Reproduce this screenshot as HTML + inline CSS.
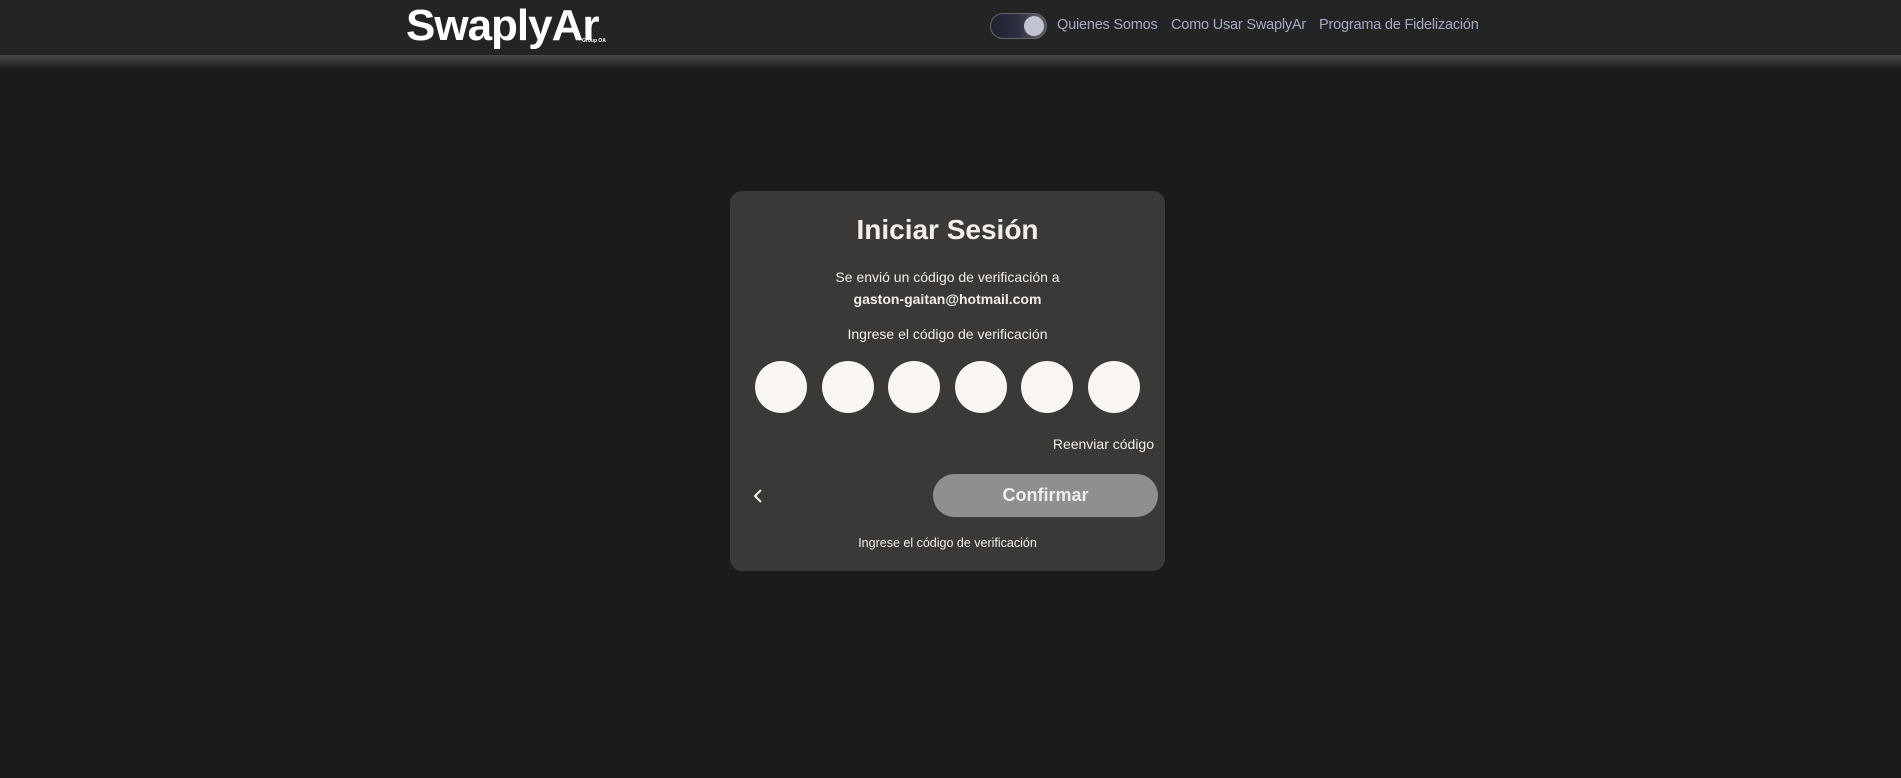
<!DOCTYPE html>
<html><head><meta charset="utf-8"><style>
*{margin:0;padding:0;box-sizing:border-box}
body{width:1901px;height:778px;background:#1b1b1b;font-family:"Liberation Sans",sans-serif;position:relative;overflow:hidden}
.hdr{position:absolute;left:0;top:0;width:1901px;height:56px;background:#242424}
.band{position:absolute;left:0;top:55px;width:1901px;height:14px;background:linear-gradient(#4a4a4a,#1b1b1b)}
.logo{position:absolute;left:406px;top:1px;font-size:44px;font-weight:bold;color:#fff;letter-spacing:-1px}
.sub{position:absolute;left:582px;top:38px;font-size:5px;color:#fff;font-weight:bold}
.tog{position:absolute;left:990px;top:13px;width:57px;height:26px;border-radius:13px;background:linear-gradient(90deg,#1e2233,#2c3040 50%,#555 80%);border:1.5px solid #666}
.knob{position:absolute;right:2px;top:2px;width:20px;height:20px;border-radius:50%;background:#c0c4d0}
.nav{position:absolute;top:17px;font-size:14.5px;color:#a3abc4;letter-spacing:-0.2px}
.card{position:absolute;left:730px;top:191px;width:435px;height:380px;background:#393938;border-radius:12px;color:#f5eee6;text-align:center}
.t{position:absolute;width:100%;left:0}
.c{position:absolute;top:170px;width:52px;height:52px;border-radius:50%;background:#f9f5f0}
.btn{position:absolute;left:203px;top:283px;width:225px;height:43px;border-radius:22px;background:#8f8f8f;color:#efefef;font-size:18px;font-weight:bold;line-height:43px;text-align:center}
</style></head><body>
<div class="hdr"></div><div class="band"></div>
<div class="logo">SwaplyAr</div><div class="sub">Group OA</div>
<div class="tog"><div class="knob"></div></div>
<div class="nav" style="left:1057px">Quienes Somos</div>
<div class="nav" style="left:1171px">Como Usar SwaplyAr</div>
<div class="nav" style="left:1319px">Programa de Fidelización</div>
<div class="card">
<div class="t" style="top:23px;font-size:28px;font-weight:bold">Iniciar Sesión</div>
<div class="t" style="top:78px;font-size:14px">Se envió un código de verificación a</div>
<div class="t" style="top:100px;font-size:14px;font-weight:bold">gaston-gaitan@hotmail.com</div>
<div class="t" style="top:135px;font-size:14px">Ingrese el código de verificación</div>
<div class="c" style="left:25px"></div><div class="c" style="left:92px"></div><div class="c" style="left:158px"></div><div class="c" style="left:225px"></div><div class="c" style="left:291px"></div><div class="c" style="left:358px"></div>
<div style="position:absolute;right:11px;top:245px;font-size:14px">Reenviar código</div>
<svg style="position:absolute;left:22px;top:297px" width="12" height="16"><path d="M9 2 L3 8 L9 14" stroke="#f5eee6" stroke-width="2" fill="none"/></svg>
<div class="btn">Confirmar</div>
<div class="t" style="top:345px;font-size:12.5px">Ingrese el código de verificación</div>
</div>
</body></html>
